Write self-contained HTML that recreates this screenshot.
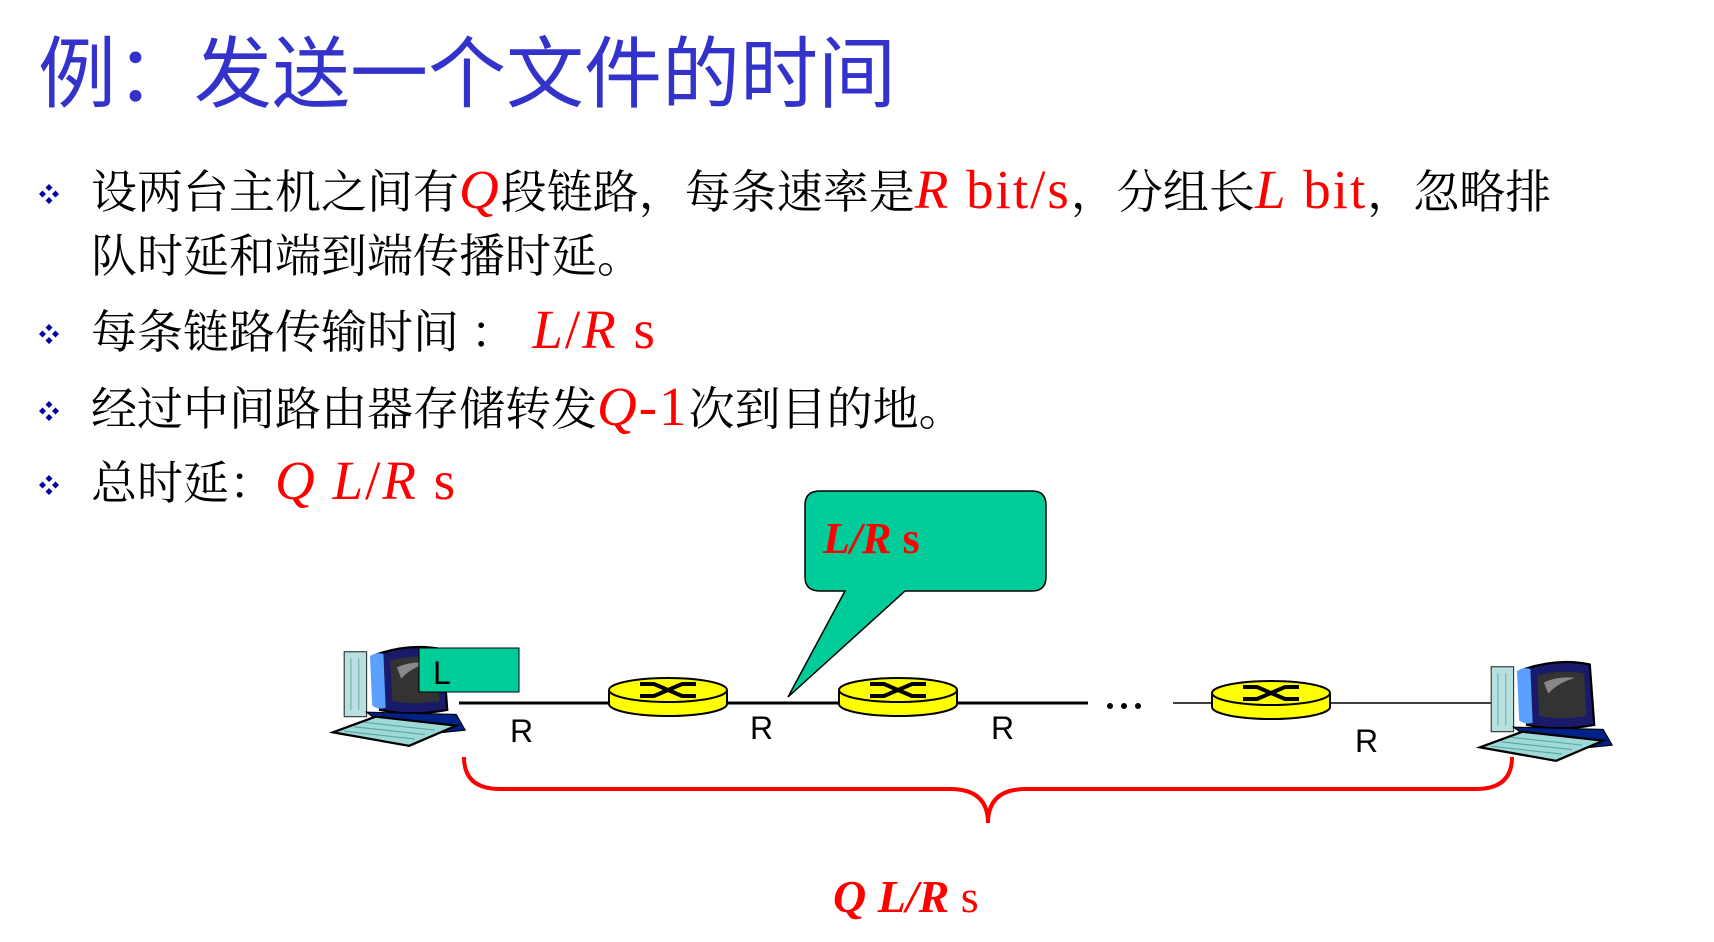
<!DOCTYPE html>
<html><head><meta charset="utf-8"><style>
html,body{margin:0;padding:0;background:#fff;}
body{width:1714px;height:942px;position:relative;overflow:hidden;}
.t{position:absolute;white-space:nowrap;}
.title{left:38px;top:30px;font:78px "Liberation Sans","Noto Sans CJK SC",sans-serif;color:#3333cc;line-height:88px;}
.b{position:absolute;left:39px;width:20px;height:20px;}
.line{left:91px;font:46px "Liberation Serif","Noto Serif CJK SC",serif;color:#000;line-height:60px;}
.r{color:#ff0000;font-size:55px;letter-spacing:2px;line-height:0;}
.i{font-style:italic;}
</style></head><body>
<div class="t title">例：发送一个文件的时间</div>

<svg width="0" height="0" style="position:absolute"><defs>
<g id="dia"><path d="M10 0L13.5 3.5L10 7L6.5 3.5Z M3.5 6.5L7 10L3.5 13.5L0 10Z M16.5 6.5L20 10L16.5 13.5L13 10Z M10 13L13.5 16.5L10 20L6.5 16.5Z" fill="#0000aa"/></g>
</defs></svg>

<svg class="b" style="top:184px"><use href="#dia"/></svg>
<svg class="b" style="top:324px"><use href="#dia"/></svg>
<svg class="b" style="top:401px"><use href="#dia"/></svg>
<svg class="b" style="top:475px"><use href="#dia"/></svg>

<div class="t line" style="top:163px">设两台主机之间有<span class="r i">Q</span>段链路，每条速率是<span class="r"><i>R</i> bit/s</span>，分组长<span class="r"><i>L</i> bit</span>，忽略排</div>
<div class="t line" style="top:227px">队时延和端到端传播时延。</div>
<div class="t line" style="top:303px">每条链路传输时间 ：<span class="r"> <i>L</i>/<i>R</i> s</span></div>
<div class="t line" style="top:380px">经过中间路由器存储转发<span class="r"><i>Q</i>-1</span>次到目的地。</div>
<div class="t line" style="top:454px">总时延：<span class="r"><i>Q L</i>/<i>R</i> s</span></div>

<svg style="position:absolute;left:0;top:0" width="1714" height="942">
<defs>
<g id="router">
 <path d="M-59 0 L-59 14 A59 12 0 0 0 59 14 L59 0" fill="#ffff00" stroke="#000" stroke-width="2"/>
 <ellipse cx="0" cy="0" rx="59" ry="12" fill="#ffff00" stroke="#000" stroke-width="2"/>
 <path d="M-28 -6 H-14 L14 6 H28 M-28 6 H-14 L14 -6 H28" fill="none" stroke="#000" stroke-width="4"/>
</g>
<g id="pc" transform="scale(1.12)">
 <rect x="10" y="6" width="20" height="58" fill="#b8e0e0" stroke="#333" stroke-width="1"/>
 <path d="M16 12v46M23 12v46" stroke="#7aa" stroke-width="1"/>
 <path d="M40 8 Q70 -2 98 4 L102 58 Q70 64 42 58 Z" fill="#1a1a6a" stroke="#000" stroke-width="2"/>
 <path d="M33 10 Q38 6 45 8 L47 56 Q40 58 35 54 Z" fill="#5aa0ff"/>
 <path d="M51 14 Q72 8 93 12 L95 50 Q72 54 53 50 Z" fill="#333"/>
 <path d="M57 20 Q70 14 85 16 Q70 20 61 30 Z" fill="#888"/>
 <path d="M30 60 L110 62 L118 76 L60 82 Z" fill="#002288" stroke="#000"/>
 <path d="M0 78 L38 64 L110 72 L68 90 Z" fill="#9fd8d8" stroke="#000" stroke-width="2"/>
 <path d="M10 77 L73 84 M19 73 L82 80 M28 69 L91 76" stroke="#5a9" stroke-width="1"/>
</g>
</defs>

<line x1="459" y1="703" x2="1088" y2="703" stroke="#000" stroke-width="3"/>
<line x1="1173" y1="703" x2="1492" y2="703" stroke="#000" stroke-width="1.5"/>
<circle cx="1110" cy="706" r="3" fill="#000"/><circle cx="1124" cy="706" r="3" fill="#000"/><circle cx="1138" cy="706" r="3" fill="#000"/>

<use href="#pc" x="333" y="645"/>
<use href="#pc" x="1480" y="660"/>
<rect x="419" y="648" width="100" height="44" fill="#00cc99" stroke="#000" stroke-width="1"/>
<text x="433" y="684" font-family="Liberation Sans, sans-serif" font-size="32" fill="#000">L</text>

<use href="#router" x="668" y="690"/>
<use href="#router" x="898" y="690"/>
<use href="#router" x="1271" y="693"/>

<g font-family="Liberation Sans, sans-serif" font-size="32" fill="#000">
<text x="510" y="742">R</text>
<text x="750" y="739">R</text>
<text x="991" y="739">R</text>
<text x="1355" y="752">R</text>
</g>

<path d="M820 491 H1032 Q1046 491 1046 505 V577 Q1046 591 1032 591 H905 L788 697 L845 591 H820 Q805 591 805 577 V505 Q805 491 820 491 Z" fill="#00cc99" stroke="#000" stroke-width="1.5"/>
<text x="823" y="553" font-family="Liberation Serif, serif" font-size="44" font-weight="bold" fill="#ff0000"><tspan font-style="italic">L/R</tspan> s</text>

<path d="M464 757 Q464 789 500 789 H950 Q988 789 988 823 Q988 789 1026 789 H1476 Q1512 789 1512 757" fill="none" stroke="#ff0000" stroke-width="4"/>
<text x="833" y="912" font-family="Liberation Serif, serif" font-size="46" fill="#ff0000"><tspan font-style="italic" font-weight="bold">Q L/R</tspan> s</text>
</svg>
</body></html>
